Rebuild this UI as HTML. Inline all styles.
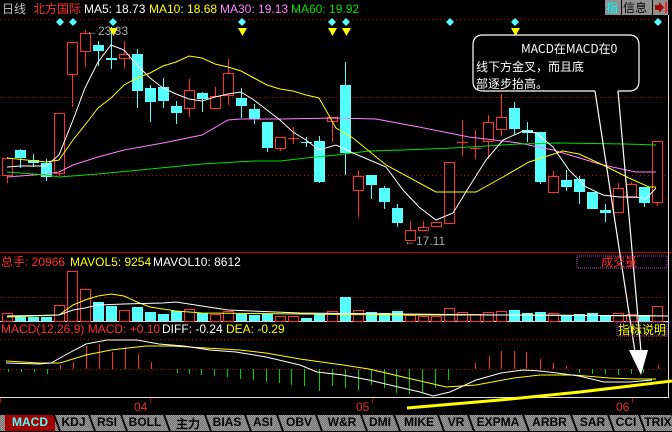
<!DOCTYPE html>
<html><head><meta charset="utf-8"><style>
html,body{margin:0;padding:0;background:#000;width:672px;height:431px;overflow:hidden}
svg{display:block}
text{font-family:"Liberation Sans","WenQuanYi Zen Hei",sans-serif;font-size:12px}
.cj{font-family:"WenQuanYi Zen Hei","Noto Sans CJK SC",sans-serif}
.tabs{position:absolute;left:0;top:415px;width:672px;height:16px;background:repeating-conic-gradient(#a0a0a0 0 25%,#707070 0 50%) 0 0/2px 2px;}
.tab{position:absolute;top:0;height:16px;line-height:16px;font:bold 12px "Liberation Sans","WenQuanYi Zen Hei",sans-serif;color:#000;text-align:center}
</style></head><body>
<svg id="s" width="672" height="431" xmlns="http://www.w3.org/2000/svg">
<defs><pattern id="dt" width="4" height="1" patternUnits="userSpaceOnUse"><rect width="1" height="1" fill="#c00000"/></pattern></defs>
<rect x="0" y="19" width="668" height="1" fill="url(#dt)"/>
<rect x="0" y="97" width="668" height="1" fill="url(#dt)"/>
<rect x="0" y="175" width="668" height="1" fill="url(#dt)"/>
<rect x="0" y="252" width="672" height="1" fill="#c00000"/>
<rect x="0" y="297" width="668" height="1" fill="url(#dt)"/>
<rect x="0" y="321" width="668" height="1" fill="#ddd"/>
<rect x="0" y="339" width="668" height="1" fill="url(#dt)"/>
<rect x="0" y="369" width="668" height="1" fill="url(#dt)"/>
<rect x="0" y="397" width="668" height="1" fill="#ddd"/>
<rect x="668" y="15" width="1" height="383" fill="#ddd"/>
<g fill="#c00000"><rect x="150" y="398" width="1" height="5"/><rect x="372" y="398" width="1" height="5"/><rect x="632" y="398" width="1" height="5"/><rect x="0" y="398" width="1" height="5"/></g>
<g fill="#e03030"><text x="134" y="411">04</text><text x="356" y="411">05</text><text x="616" y="411">06</text></g>
<g id="cd"></g>
<polyline fill="none" stroke="#ff80ff" stroke-width="1" points="7,177 46,174 59,172 73,165 98,157 124,150 163,143 202,135 228,120 241,119 280,119 336,118 376,119 419,127 469,137 519,143 553,150 603,165 636,172 656,172"/>
<polyline fill="none" stroke="#00e000" stroke-width="1" points="7,172 46,175 59,177 98,174 150,169 202,164 254,161 280,161 306,158 336,155 369,151 403,150 453,148 486,146 519,144 559,143 626,144 656,145"/>
<polyline fill="none" stroke="#ffff00" stroke-width="1" points="7,158 46,162 59,160 73,140 85,125 98,108 111,98 124,85 137,78 150,73 163,66 176,62 189,56 202,58 215,64 228,67 241,71 254,78 267,85 280,89 293,91 306,95 319,98 336,128 353,138 386,165 436,192 476,192 503,177 529,162 563,151 579,154 603,165 629,178 649,187 656,187"/>
<polyline fill="none" stroke="#fff" stroke-width="1" points="7,167 20,166 46,166 59,155 73,120 85,88 98,62 111,45 124,50 137,65 150,78 163,88 176,94 189,99 202,101 215,97 228,94 241,92 254,100 267,110 280,120 293,132 306,140 319,150 336,145 353,153 386,167 403,190 419,207 436,220 453,213 469,187 486,160 503,140 523,131 536,133 553,147 569,170 586,187 603,195 619,197 636,197 646,199 656,188"/>
<g id="sig"></g>
<g fill="#a8a8a8"><text x="86" y="35" font-size="13">←23.33</text><text x="404" y="245" font-size="13">←17.11</text></g>
<polyline fill="none" stroke="#ffff00" points="7,317 59,315 73,305 85,300 98,296 111,294 124,296 137,302 150,307 176,311 202,313 300,314 400,315 500,315 668,316"/>
<polyline fill="none" stroke="#fff" points="7,316 59,315 73,310 85,308 98,305 124,304 163,303 176,302 189,304 202,306 228,310 300,313 400,314 500,315 668,316"/>
<g id="mh"></g>
<polyline fill="none" stroke="#ffff00" points="6,361 39,363 60,363 86,355 111,350 146,346 171,346 206,348 240,350 266,353 300,359 343,365 369,369 403,377 429,383 446,387 476,385 514,378 540,375 574,375 609,378 634,379 656,379"/>
<polyline fill="none" stroke="#fff" points="6,363 39,364 51,363 69,353 86,344 107,340 137,340 159,344 184,346 210,350 236,352 266,357 300,365 317,372 343,375 369,380 394,386 420,392 433,396 450,392 476,380 501,373 523,370 540,371 557,373 579,376 604,382 630,382 652,380"/>
<polyline fill="none" stroke="#ffff00" stroke-width="3" points="407,408 500,400 580,392 672,381"/>
<!-- callout -->
<path d="M483,35 H629 Q639,35 639,45 V81 Q639,91 629,91 H618 M595,91 H483 Q473,91 473,81 V45 Q473,35 483,35" fill="#000" stroke="#fff" stroke-width="1.2"/>
<line x1="595" y1="91" x2="635" y2="352" stroke="#fff" stroke-width="1.2"/>
<line x1="618" y1="91" x2="641" y2="352" stroke="#fff" stroke-width="1.2"/>
<polygon points="629,350 648,350 641,375" fill="#fff"/>
<g fill="#fff" class="cj" font-size="15"><text class="cj" x="521" y="53" font-size="14">MACD在MACD在0</text><text class="cj" x="476" y="71" font-size="15">线下方金叉，而且底</text><text class="cj" x="476" y="88" font-size="15">部逐步抬高。</text></g>
<!-- headers -->
<text x="2" y="13" fill="#c0c0c0">日线</text>
<text x="33" y="13" fill="#ff3030">北方国际</text>
<text x="84" y="13" fill="#fff">MA5: 18.73</text>
<text x="149" y="13" fill="#ffff00">MA10: 18.68</text>
<text x="220" y="13" fill="#ff80ff">MA30: 19.13</text>
<text x="291" y="13" fill="#00e000">MA60: 19.92</text>
<rect x="605" y="0" width="16" height="15" fill="#909090"/><text x="606" y="12" fill="#00ffff" font-size="13">指</text>
<rect x="622" y="0" width="30" height="15" fill="#909090"/><text x="623" y="12" fill="#000" font-size="13">信息</text>
<rect x="653" y="0" width="15" height="15" fill="#909090"/><polygon points="655,5 659,5 659,2 664,7.5 659,13 659,10 655,10" fill="#a00000"/><rect x="665" y="2" width="2" height="11" fill="#ff2020"/>
<text x="1" y="266" fill="#ff3030">总手: 20966</text>
<text x="70" y="266" fill="#ffff00">MAVOL5: 9254</text>
<text x="153" y="266" fill="#fff">MAVOL10: 8612</text>
<rect x="577" y="256" width="90" height="12" fill="none" stroke="#c040c0" stroke-dasharray="1,1"/>
<text x="601" y="266" fill="#ff3030">成交量</text>
<text x="1" y="333" fill="#ff3030">MACD(12,26,9) MACD: +0.10</text>
<text x="162" y="333" fill="#fff">DIFF: -0.24</text>
<text x="226" y="333" fill="#ffff00">DEA: -0.29</text>
<rect x="617" y="322" width="50" height="14" fill="none" stroke="#c040c0" stroke-dasharray="1,1"/>
<text x="618" y="334" fill="#ffff00">指标说明</text>
</svg>
<div class="tabs" id="tabs"></div>
<script>
var C=[[158,157,183,175,1],[150,149,168,158,0],[160,154,167,163,0],[163,159,181,177,0],[113,113,176,173,1],[42,42,107,74,1],[33,30,67,51,1],[45,41,66,51,0],[58,27,69,60,0],[54,41,68,58,1],[54,49,108,91,0],[88,85,122,102,0],[87,78,108,101,0],[106,101,124,113,0],[90,79,117,108,1],[93,92,112,99,0],[96,87,109,108,1],[73,59,105,95,1],[98,88,118,106,0],[109,104,124,119,0],[122,122,152,148,0],[137,137,151,148,1],[138,127,144,139,1],[142,137,147,143,0],[141,136,183,182,0],[117,117,142,121,1],[85,62,175,153,0],[176,170,217,190,1],[175,175,199,185,0],[188,186,209,202,0],[208,204,227,223,0],[230,221,241,240,1],[227,221,230,230,1],[222,222,226,226,1],[162,162,223,223,1],[142,120,156,143,1],[148,130,159,149,1],[122,115,159,141,1],[117,94,136,129,1],[108,102,135,129,0],[130,122,142,133,0],[132,132,184,182,0],[176,171,192,192,1],[180,170,191,187,0],[179,176,204,192,0],[192,192,209,209,0],[210,204,222,213,0],[188,183,212,212,1],[184,182,197,197,1],[187,187,207,203,0],[141,141,206,202,1]];
var V=[313,317,317,317,305,271,289,302,306,310,307,312,314,311,309,313,314,311,314,315,314,316,316,318,314,311,297,310,312,313,311,315,316,316,308,312,314,312,311,310,313,312,313,315,314,313,316,313,314,315,306];
var h='',r='#ff3030',c='#55ffff';
C.forEach(function(d,i){var x=7+13*i,t=Math.min(d[0],d[3]),b=Math.max(d[0],d[3]),col=d[4]?r:c;
h+='<line x1="'+(x+.5)+'" y1="'+d[1]+'" x2="'+(x+.5)+'" y2="'+d[2]+'" stroke="'+col+'"/>';
if(b-t<2)h+='<line x1="'+(x-5)+'" y1="'+(t+.5)+'" x2="'+(x+6)+'" y2="'+(t+.5)+'" stroke="'+col+'"/>';
else if(d[4])h+='<rect x="'+(x-4.5)+'" y="'+(t+.5)+'" width="10" height="'+(b-t)+'" fill="#000" stroke="'+r+'"/>';
else h+='<rect x="'+(x-5)+'" y="'+t+'" width="11" height="'+(b-t)+'" fill="'+c+'"/>';
var v=V[i];
if(d[4])h+='<rect x="'+(x-4.5)+'" y="'+(v+.5)+'" width="10" height="'+(321-v)+'" fill="none" stroke="'+r+'"/>';
else h+='<rect x="'+(x-5)+'" y="'+v+'" width="11" height="'+(321-v)+'" fill="'+c+'"/>';});
document.getElementById('cd').innerHTML=h;
var s='';[60,73,113,242,332,346,450,515,658].forEach(function(x){s+='<polygon points="'+x+',18 '+(x+4)+',22 '+x+',26 '+(x-4)+',22" fill="#55ffff"/>';});
[113,242,332,346,515].forEach(function(x){s+='<polygon points="'+(x-4)+',28 '+(x+5)+',28 '+(x+.5)+',36" fill="#ffff00"/>';});
document.getElementById('sig').innerHTML=s;
var M=[[8,372],[21,372],[34,372],[47,374],[60,365],[73,362],[86,346],[99,344],[112,352],[125,347],[138,354],[151,362],[177,373],[189,374],[201,375],[214,376],[227,377],[240,379],[253,380],[266,382],[279,383],[291,385],[304,386],[319,391],[332,386],[345,388],[358,390],[371,385],[384,388],[396,393],[409,394],[422,392],[435,388],[448,380],[475,363],[489,356],[501,351],[514,351],[526,352],[540,359],[553,363],[566,366],[579,373],[592,374],[605,374],[618,375],[631,374],[643,373],[658,365]];
var m='';M.forEach(function(d){var col=d[1]<369?'#ff3030':'#00d000';m+='<line x1="'+(d[0]+.5)+'" y1="369" x2="'+(d[0]+.5)+'" y2="'+d[1]+'" stroke="'+col+'"/>';});
document.getElementById('mh').innerHTML=m;
var T=[['MACD',5,50],['KDJ',57,33],['RSI',92,30],['BOLL',125,40],['主力',170,36],['BIAS',208,38],['ASI',248,30],['OBV',281,36],['W&amp;R',322,40],['DMI',365,30],['MIKE',399,40],['VR',443,26],['EXPMA',472,52],['ARBR',527,45],['SAR',576,33],['CCI',612,28],['TRIX',643,30]];
var g='';T.forEach(function(t,i){var st=i==0?'background:#a00000;color:#55ffff;':'';g+='<div class="tab" style="left:'+t[1]+'px;width:'+t[2]+'px;'+st+'">'+t[0]+'</div><div style="position:absolute;top:0;left:'+(t[1]+t[2]+1)+'px;width:2px;height:16px;background:#000;transform:skewX(20deg)"></div>';});
document.getElementById('tabs').innerHTML=g;
</script>
</body></html>
